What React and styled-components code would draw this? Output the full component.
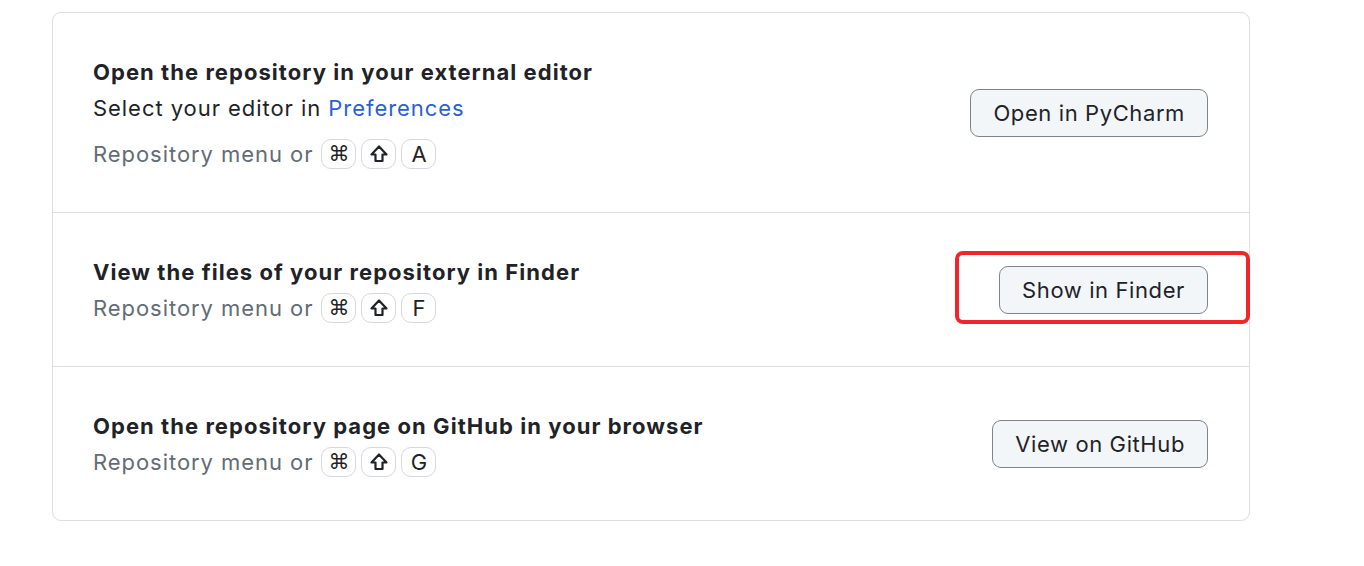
import React from "react";
import styled, { createGlobalStyle } from "styled-components";

const Global = createGlobalStyle`
  html, body { margin: 0; padding: 0; background: #ffffff; }
  body { font-family: Inter, "Noto Sans", "DejaVu Sans", sans-serif; color: #1f2328; }
`;

const Page = styled.div`
  padding: 12px 0 0 52px;
`;

const Card = styled.div`
  width: 1196px;
  border: 1.5px solid #dcdee3;
  border-radius: 9px;
  display: flex;
  flex-direction: column;
`;

const Row = styled.div`
  display: flex;
  align-items: center;
  justify-content: space-between;
  height: ${(p) => p.$h}px;
  padding: 0 41px 0 40px;
  box-sizing: border-box;
  border-top: ${(p) => (p.$first ? "none" : "1.5px solid #dcdee3")};
`;

const Info = styled.div`
  display: flex;
  flex-direction: column;
`;

const Title = styled.div`
  font-size: 22px;
  font-weight: 700;
  line-height: 36px;
  letter-spacing: 1.05px;
  color: #1f2328;
`;

const Sub = styled.div`
  font-size: 22px;
  line-height: 36px;
  letter-spacing: 0.95px;
  color: #1f2328;
`;

const Link = styled.a`
  color: #2b5fd9;
  text-decoration: none;
`;

const Shortcut = styled.div`
  display: flex;
  align-items: center;
  gap: 5px;
  font-size: 22px;
  line-height: 36px;
  letter-spacing: 0.95px;
  color: #636c76;
  margin-top: ${(p) => (p.$gap ? 10 : 0)}px;
`;

const Lead = styled.span`
  margin-right: 3px;
`;

const Key = styled.span`
  display: inline-flex;
  align-items: center;
  justify-content: center;
  width: 35px;
  height: 30px;
  box-sizing: border-box;
  border: 1.5px solid #d5d8de;
  border-radius: 10px;
  color: #1f2328;
  font-size: 21px;
  letter-spacing: 0;
  font-family: "DejaVu Sans", Inter, sans-serif;
`;

const KeyLetter = styled(Key)`
  font-family: Inter, "Noto Sans", sans-serif;
  font-size: 22px;
`;

const ButtonWrap = styled.div`
  position: relative;
  display: flex;
`;

const Button = styled.button`
  height: 48px;
  padding: 0 22px;
  background: #f3f6f9;
  border: 1.5px solid #7d848d;
  border-radius: 9px;
  font-family: Inter, "Noto Sans", sans-serif;
  font-size: 22px;
  letter-spacing: 0.6px;
  color: #1f2328;
  cursor: pointer;
`;

const Highlight = styled.div`
  position: absolute;
  left: -44px;
  right: -42px;
  top: -15px;
  bottom: -10px;
  border: 4px solid #f0262a;
  border-radius: 8px;
  pointer-events: none;
`;

const ShiftIcon = () => (
  <svg width="20" height="20" viewBox="0 0 20 20" fill="none">
    <path
      d="M10 2.5 L17.5 10.5 H13.5 V17 H6.5 V10.5 H2.5 Z"
      stroke="#1f2328"
      strokeWidth="2.2"
      strokeLinejoin="round"
    />
  </svg>
);

const Keys = ({ letter }) => (
  <>
    <Key>⌘</Key>
    <Key>
      <ShiftIcon />
    </Key>
    <KeyLetter>{letter}</KeyLetter>
  </>
);

export default function App() {
  return (
    <>
      <Global />
      <Page>
        <Card>
          <Row $first $h={199}>
            <Info>
              <Title>Open the repository in your external editor</Title>
              <Sub>
                Select your editor in <Link>Preferences</Link>
              </Sub>
              <Shortcut $gap>
                <Lead>Repository menu or</Lead>
                <Keys letter="A" />
              </Shortcut>
            </Info>
            <ButtonWrap>
              <Button>Open in PyCharm</Button>
            </ButtonWrap>
          </Row>
          <Row $h={154}>
            <Info>
              <Title>View the files of your repository in Finder</Title>
              <Shortcut>
                <Lead>Repository menu or</Lead>
                <Keys letter="F" />
              </Shortcut>
            </Info>
            <ButtonWrap>
              <Button>Show in Finder</Button>
              <Highlight />
            </ButtonWrap>
          </Row>
          <Row $h={154}>
            <Info>
              <Title>Open the repository page on GitHub in your browser</Title>
              <Shortcut>
                <Lead>Repository menu or</Lead>
                <Keys letter="G" />
              </Shortcut>
            </Info>
            <ButtonWrap>
              <Button>View on GitHub</Button>
            </ButtonWrap>
          </Row>
        </Card>
      </Page>
    </>
  );
}
